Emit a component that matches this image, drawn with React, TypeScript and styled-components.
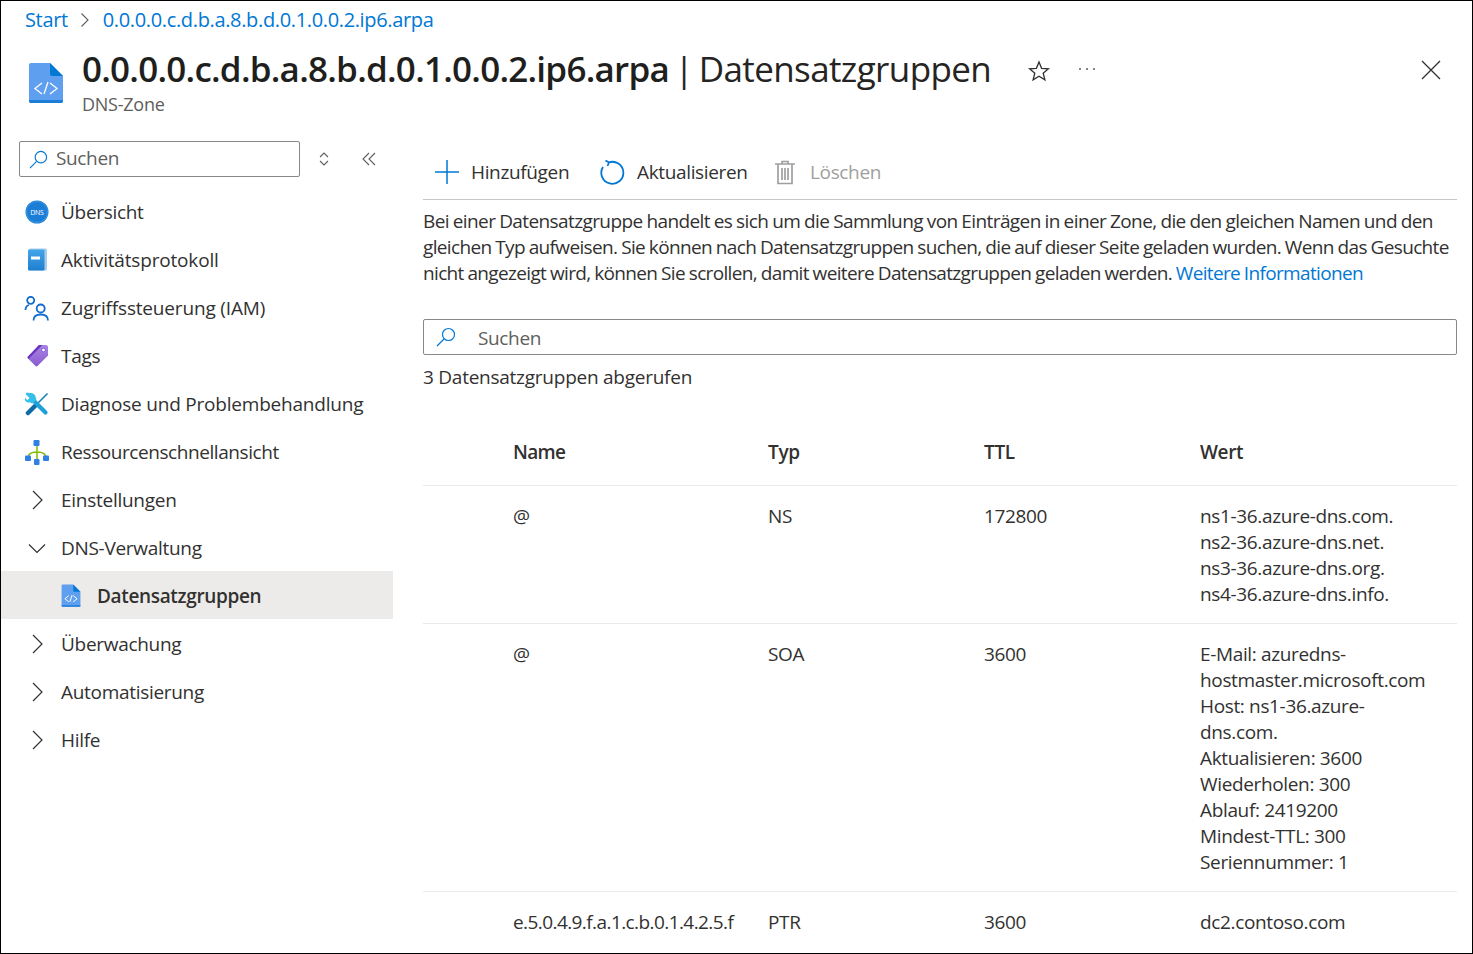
import React from "react";
import styled, { createGlobalStyle } from "styled-components";

const Global = createGlobalStyle`
  html, body { margin: 0; padding: 0; background: #fff; }
  * { box-sizing: border-box; }
`;

const Frame = styled.div`
  width: 1473px;
  height: 954px;
  border: 1px solid #000;
  overflow: hidden;
  background: #fff;
  color: #323130;
  font-family: "Open Sans", "Noto Sans", sans-serif;
  font-size: 19px;
  letter-spacing: -0.35px;
  display: flex;
  flex-direction: column;
`;

const Crumbs = styled.nav`
  height: 37px;
  padding-left: 24px;
  display: flex;
  align-items: center;
  gap: 12.5px;
  color: #0078d4;
  font-size: 20px;
  flex: none;
`;

const Head = styled.header`
  height: 101px;
  padding: 0 31px 0 27px;
  display: flex;
  align-items: flex-start;
  flex: none;
`;

const HeadIcon = styled.div`
  width: 36px;
  margin-top: 24px;
  margin-right: 18px;
  flex: none;
`;

const Titles = styled.div`
  display: flex;
  flex-direction: column;
`;

const Title = styled.h1`
  margin: 6px 0 0;
  font-size: 35px;
  line-height: 50px;
  font-weight: 400;
  color: #252423;
  letter-spacing: -0.6px;
  word-spacing: -3px;
  white-space: nowrap;
  b { font-weight: 600; color: #201f1e; letter-spacing: -0.75px; }
`;

const Sub = styled.div`
  font-size: 18px;
  line-height: 22px;
  color: #605e5c;
  margin-top: -1px;
  letter-spacing: -0.25px;
`;

const HeadTools = styled.div`
  margin-left: 37px;
  margin-top: 22px;
  display: flex;
  align-items: flex-start;
  gap: 28px;
`;

const Dots = styled.svg`
  margin-top: 7px;
`;

const Close = styled.div`
  margin-left: auto;
  margin-top: 22px;
`;

const Body = styled.div`
  flex: 1;
  display: flex;
  min-height: 0;
`;

const Side = styled.aside`
  width: 392px;
  flex: none;
  padding-top: 2px;
`;

const SideTop = styled.div`
  height: 46px;
  padding-left: 18px;
  display: flex;
  align-items: flex-start;
`;

const SearchBox = styled.div<{ $width?: string; $gap: number; $pad: number; $nudge: number }>`
  width: ${(p) => p.$width ?? "100%"};
  height: 36px;
  border: 1px solid #8a8886;
  border-radius: 2px;
  display: flex;
  align-items: center;
  gap: ${(p) => p.$gap}px;
  padding-left: ${(p) => p.$pad}px;
  color: #605e5c;
  flex: none;
  span { position: relative; top: ${(p) => p.$nudge}px; }
`;

const SideBtns = styled.div`
  display: flex;
  align-items: center;
  height: 36px;
  margin-left: 18px;
  gap: 32px;
`;

const Row = styled.div<{ $active?: boolean; $sub?: boolean; $ls?: number }>`
  height: 48px;
  display: flex;
  align-items: center;
  padding-top: 2px;
  padding-left: ${(p) => (p.$sub ? "60px" : "22px")};
  background: ${(p) => (p.$active ? "#edebe9" : "transparent")};
  font-weight: ${(p) => (p.$active ? 600 : 400)};
  letter-spacing: ${(p) => p.$ls ?? -0.3}px;
  white-space: nowrap;
`;

const RowIcon = styled.span<{ $w: number }>`
  width: ${(p) => p.$w}px;
  flex: none;
  display: flex;
  align-items: center;
`;

const Main = styled.main`
  flex: 1;
  min-width: 0;
  padding: 9px 15px 0 30px;
`;

const Toolbar = styled.div`
  height: 52px;
  border-bottom: 1px solid #c8c6c4;
  padding: 0 0 3px 12px;
  display: flex;
  align-items: center;
`;

const ToolBtn = styled.div<{ $disabled?: boolean; $gap: number; $w: number }>`
  width: ${(p) => p.$w}px;
  display: flex;
  align-items: center;
  gap: ${(p) => p.$gap}px;
  color: ${(p) => (p.$disabled ? "#a19f9d" : "#323130")};
`;

const Intro = styled.div`
  margin: 8px 0 0;
  line-height: 26px;
  a { color: #0078d4; text-decoration: none; }
`;

const IntroLine = styled.div<{ $ls: number }>`
  white-space: nowrap;
  letter-spacing: ${(p) => p.$ls}px;
  word-spacing: -0.5px;
`;

const SearchWrap = styled.div`
  margin-top: 33px;
`;

const Count = styled.div`
  margin-top: 9px;
  line-height: 26px;
  letter-spacing: -0.25px;
`;

const Cells = styled.div<{ $head?: boolean; $h: number; $last?: boolean }>`
  display: grid;
  grid-template-columns: 90px 255px 216px 216px 1fr;
  height: ${(p) => p.$h}px;
  border-bottom: ${(p) => (p.$last ? "none" : "1px solid #edebe9")};
  padding-top: ${(p) => (p.$head ? 49 : 17)}px;
  line-height: 26px;
  font-weight: ${(p) => (p.$head ? 600 : 400)};
`;

const Cell = styled.span<{ $ls?: number }>`
  white-space: nowrap;
  ${(p) => (p.$ls !== undefined ? `letter-spacing: ${p.$ls}px;` : "")}
`;

const Line = styled.div`
  white-space: nowrap;
`;

const Doc = ({ s, code }: { s: number; code?: boolean }) => (
  <svg width={s} height={s * 1.17} viewBox="0 0 36 42">
    <path d="M1 3a2 2 0 0 1 2-2h19l13 13v25a2 2 0 0 1-2 2H3a2 2 0 0 1-2-2z" fill="#5ea0ef" />
    <path d="M1 38h34v1a2 2 0 0 1-2 2H3a2 2 0 0 1-2-2z" fill="#1b7ed6" />
    <path d="M22 1l13 13H24a2 2 0 0 1-2-2z" fill="#0078d4" />
    <path d="M14 21l-7 5.500 7 5.500M22 21l7 5.500-7 5.500M20 20l-4 12" fill="none" stroke="#fff" strokeWidth={code ? 1.8 : 1.3} />
  </svg>
);

const Search = ({ s = 20 }: { s?: number }) => (
  <svg width={s} height={s} viewBox="0 0 20 20" fill="none" stroke="#0078d4" strokeWidth="1.2">
    <circle cx="12.5" cy="7.5" r="6" />
    <path d="M8 12L1 19" />
  </svg>
);

const Chevron = ({ open }: { open?: boolean }) =>
  open ? (
    <svg width="18" height="11" viewBox="0 0 18 11" fill="none" stroke="#323130" strokeWidth="1.2" style={{ marginLeft: 5 }}>
      <path d="M1 1.500L9 9.500l8-8" />
    </svg>
  ) : (
    <svg width="11" height="20" viewBox="0 0 11 20" fill="none" stroke="#323130" strokeWidth="1.2" style={{ marginLeft: 9 }}>
      <path d="M1 1L10 10l-9 9" />
    </svg>
  );

const DnsIcon = () => (
  <svg width="24" height="24" viewBox="0 0 24 24" style={{ marginLeft: 2 }}>
    <circle cx="12" cy="12" r="11.500" fill="#1b7ed6" />
    <circle cx="12" cy="12" r="10.500" fill="none" stroke="#5ea8e8" strokeWidth=".5" />
    <text x="12" y="14.500" textAnchor="middle" fontSize="7" fill="#fff" fontFamily="Open Sans" letterSpacing="-0.3">DNS</text>
  </svg>
);

const BookIcon = () => (
  <svg width="22" height="24" viewBox="0 0 22 24" style={{ marginLeft: 4 }}>
    <defs>
      <linearGradient id="bookFill" x1="0" y1="0" x2="0" y2="1">
        <stop offset="0" stopColor="#44a5ea" />
        <stop offset="1" stopColor="#1f7fd0" />
      </linearGradient>
    </defs>
    <rect x="2" y="0.500" width="18" height="22" rx="1.500" fill="#a9cde9" />
    <rect x="1" y="1.500" width="16.500" height="21" rx="1" fill="url(#bookFill)" />
    <rect x="4" y="8.500" width="9" height="3" fill="#fff" />
  </svg>
);

const UsersIcon = () => (
  <svg width="25" height="25" viewBox="0 0 25 25" fill="none" stroke="#0f6cd0" strokeWidth="1.800" style={{ marginLeft: 1 }}>
    <circle cx="6.700" cy="4.300" r="3.500" />
    <circle cx="16.700" cy="12.500" r="4" />
    <path d="M1.500 14C1.500 11 3 9.500 5 9M9.500 24.500C9.500 20.500 12.500 18.500 16.700 18.500S24 20.500 24 24.500" />
  </svg>
);

const TagIcon = () => (
  <svg width="22" height="24" viewBox="0 0 22 24" style={{ marginLeft: 4 }}>
    <defs>
      <linearGradient id="tagFill" x1="0" y1="0" x2="0" y2="1">
        <stop offset="0" stopColor="#a884e4" />
        <stop offset="1" stopColor="#8a5cd0" />
      </linearGradient>
    </defs>
    <path d="M12 1h7a2 2 0 0 1 2 2v8.500L10.500 22a1.500 1.500 0 0 1-2 0L1 14.500a1.500 1.500 0 0 1 0-2z" fill="url(#tagFill)" />
    <path d="M12 1h3.500L1.500 15 1 14.500a1.500 1.500 0 0 1 0-2z" fill="#6a35c2" />
    <circle cx="16.500" cy="6" r="1.800" fill="#fff" stroke="#6a35c2" strokeWidth=".6" />
  </svg>
);

const ToolsIcon = () => (
  <svg width="24" height="24" viewBox="0 0 24 24" style={{ marginLeft: 2 }}>
    <path d="M22.500 1.500L11 13" stroke="#1a7fb5" strokeWidth="1.600" fill="none" />
    <path d="M10.500 13.500L3 21" stroke="#0f6aa8" strokeWidth="4.500" strokeLinecap="round" fill="none" />
    <path d="M7 7l13.500 13.500" stroke="#1ea0d8" strokeWidth="4.200" strokeLinecap="round" fill="none" />
    <path d="M4.500 1L2 .5.500 2l4 4-2.200 2.200L-1 4.500C-1.500 8 1.500 11 5 10.500l2.500 1 4-4-1-2.500C11 3 8 .5 4.500 1z" fill="#35c0ea" />
  </svg>
);

const TreeIcon = () => (
  <svg width="26" height="26" viewBox="0 0 26 26" style={{ marginLeft: 1 }}>
    <path d="M13 6v16M4 19c0-4 4-6 9-6s9 2 9 6" fill="none" stroke="#7fba00" strokeWidth="1.500" />
    <rect x="9.500" y="1" width="6" height="6" rx="1" fill="#2f80e4" />
    <rect x="1" y="16.500" width="6" height="5.500" rx="1" fill="#2f80e4" />
    <rect x="19" y="16.500" width="6" height="5.500" rx="1" fill="#2f80e4" />
    <rect x="10" y="20" width="5.500" height="6" rx="1" fill="#2f80e4" />
  </svg>
);

const nav: { label: string; icon: React.ReactNode; ls?: number }[] = [
  { label: "Übersicht", icon: <DnsIcon /> },
  { label: "Aktivitätsprotokoll", icon: <BookIcon />, ls: -0.18 },
  { label: "Zugriffssteuerung (IAM)", icon: <UsersIcon />, ls: -0.17 },
  { label: "Tags", icon: <TagIcon /> },
  { label: "Diagnose und Problembehandlung", icon: <ToolsIcon />, ls: -0.21 },
  { label: "Ressourcenschnellansicht", icon: <TreeIcon />, ls: -0.43 },
  { label: "Einstellungen", icon: <Chevron />, ls: -0.27 },
  { label: "DNS-Verwaltung", icon: <Chevron open /> },
];

const navEnd = ["Überwachung", "Automatisierung", "Hilfe"];

const rows: { h: number; cells: string[]; wert: string[] }[] = [
  { h: 138, cells: ["@", "NS", "172800"], wert: ["ns1-36.azure-dns.com.", "ns2-36.azure-dns.net.", "ns3-36.azure-dns.org.", "ns4-36.azure-dns.info."] },
  {
    h: 268,
    cells: ["@", "SOA", "3600"],
    wert: ["E-Mail: azuredns-", "hostmaster.microsoft.com", "Host: ns1-36.azure-", "dns.com.", "Aktualisieren: 3600", "Wiederholen: 300", "Ablauf: 2419200", "Mindest-TTL: 300", "Seriennummer: 1"],
  },
  { h: 60, cells: ["e.5.0.4.9.f.a.1.c.b.0.1.4.2.5.f", "PTR", "3600"], wert: ["dc2.contoso.com"] },
];

export default function App() {
  return (
    <Frame>
      <Global />
      <Crumbs>
        <span>Start</span>
        <svg width="10" height="16" viewBox="0 0 10 16" fill="none" stroke="#605e5c" strokeWidth="1.100">
          <path d="M1.500 1.500L8 8l-6.500 6.500" />
        </svg>
        <span>0.0.0.0.c.d.b.a.8.b.d.0.1.0.0.2.ip6.arpa</span>
      </Crumbs>
      <Head>
        <HeadIcon>
          <Doc s={36} />
        </HeadIcon>
        <Titles>
          <Title>
            <b>0.0.0.0.c.d.b.a.8.b.d.0.1.0.0.2.ip6.arpa</b> | Datensatzgruppen
          </Title>
          <Sub>DNS-Zone</Sub>
        </Titles>
        <HeadTools>
          <svg width="22" height="22" viewBox="0 0 22 22" fill="none" stroke="#323130" strokeWidth="1.300">
            <path d="M11 2l2.600 6.300 6.800.5-5.200 4.400 1.700 6.600L11 16.200l-5.900 3.600 1.700-6.600L1.600 8.800l6.800-.5z" />
          </svg>
          <Dots width="18" height="4" viewBox="0 0 18 4" fill="#605e5c">
            <circle cx="2" cy="2" r="1" />
            <circle cx="9" cy="2" r="1" />
            <circle cx="16" cy="2" r="1" />
          </Dots>
        </HeadTools>
        <Close>
          <svg width="20" height="20" viewBox="0 0 20 20" fill="none" stroke="#323130" strokeWidth="1.300">
            <path d="M1 1l18 18M19 1L1 19" />
          </svg>
        </Close>
      </Head>
      <Body>
        <Side>
          <SideTop>
            <SearchBox $width="281px" $gap={8} $pad={9} $nudge={-1}>
              <Search s={19} />
              <span>Suchen</span>
            </SearchBox>
            <SideBtns>
              <svg width="12" height="14" viewBox="0 0 12 14" fill="none" stroke="#605e5c" strokeWidth="1.100">
                <path d="M2 5l4-4 4 4M2 9l4 4 4-4" />
              </svg>
              <svg width="14" height="14" viewBox="0 0 14 14" fill="none" stroke="#605e5c" strokeWidth="1.100">
                <path d="M7 1L1 7l6 6M13 1L7 7l6 6" />
              </svg>
            </SideBtns>
          </SideTop>
          {nav.map((n) => (
            <Row key={n.label} $ls={n.ls}>
              <RowIcon $w={38}>{n.icon}</RowIcon>
              {n.label}
            </Row>
          ))}
          <Row $active $sub $ls={-0.35}>
            <RowIcon $w={36}>
              <Doc s={20} code />
            </RowIcon>
            Datensatzgruppen
          </Row>
          {navEnd.map((l) => (
            <Row key={l}>
              <RowIcon $w={38}>
                <Chevron />
              </RowIcon>
              {l}
            </Row>
          ))}
        </Side>
        <Main>
          <Toolbar>
            <ToolBtn $w={165} $gap={12}>
              <svg width="24" height="24" viewBox="0 0 24 24" stroke="#0078d4" strokeWidth="1.500">
                <path d="M12 0v24M0 12h24" />
              </svg>
              Hinzufügen
            </ToolBtn>
            <ToolBtn $w={175} $gap={12}>
              <svg width="25" height="25" viewBox="0 0 25 25" fill="none" stroke="#0078d4" strokeWidth="1.800">
                <path d="M8.500 2.500a11 11 0 1 1-5.500 4.500M5.500 0.500L9 2.500 7.500 6" />
              </svg>
              Aktualisieren
            </ToolBtn>
            <ToolBtn $w={120} $gap={15} $disabled>
              <svg width="20" height="25" viewBox="0 0 20 25" fill="none" stroke="#a19f9d" strokeWidth="1.700">
                <path d="M0 4h20M7 4V1.500h6V4M3 4v19.500h14V4M7 8v12M10 8v12M13 8v12" />
              </svg>
              Löschen
            </ToolBtn>
          </Toolbar>
          <Intro>
            <IntroLine $ls={-0.6}>Bei einer Datensatzgruppe handelt es sich um die Sammlung von Einträgen in einer Zone, die den gleichen Namen und den</IntroLine>
            <IntroLine $ls={-0.65}>gleichen Typ aufweisen. Sie können nach Datensatzgruppen suchen, die auf dieser Seite geladen wurden. Wenn das Gesuchte</IntroLine>
            <IntroLine $ls={-0.66}>
              nicht angezeigt wird, können Sie scrollen, damit weitere Datensatzgruppen geladen werden. <a>Weitere Informationen</a>
            </IntroLine>
          </Intro>
          <SearchWrap>
            <SearchBox $gap={22} $pad={12} $nudge={1}>
              <Search s={20} />
              <span>Suchen</span>
            </SearchBox>
          </SearchWrap>
          <Count>3 Datensatzgruppen abgerufen</Count>
          <Cells $head $h={96}>
            <span />
            <Cell $ls={-0.7}>Name</Cell>
            <Cell>Typ</Cell>
            <Cell>TTL</Cell>
            <Cell>Wert</Cell>
          </Cells>
          {rows.map((r, i) => (
            <Cells key={i} $h={r.h} $last={i === rows.length - 1}>
              <span />
              <Cell $ls={r.cells[0].length > 1 ? -0.58 : undefined}>{r.cells[0]}</Cell>
              <Cell>{r.cells[1]}</Cell>
              <Cell>{r.cells[2]}</Cell>
              <div>
                {r.wert.map((w) => (
                  <Line key={w}>{w}</Line>
                ))}
              </div>
            </Cells>
          ))}
        </Main>
      </Body>
    </Frame>
  );
}
